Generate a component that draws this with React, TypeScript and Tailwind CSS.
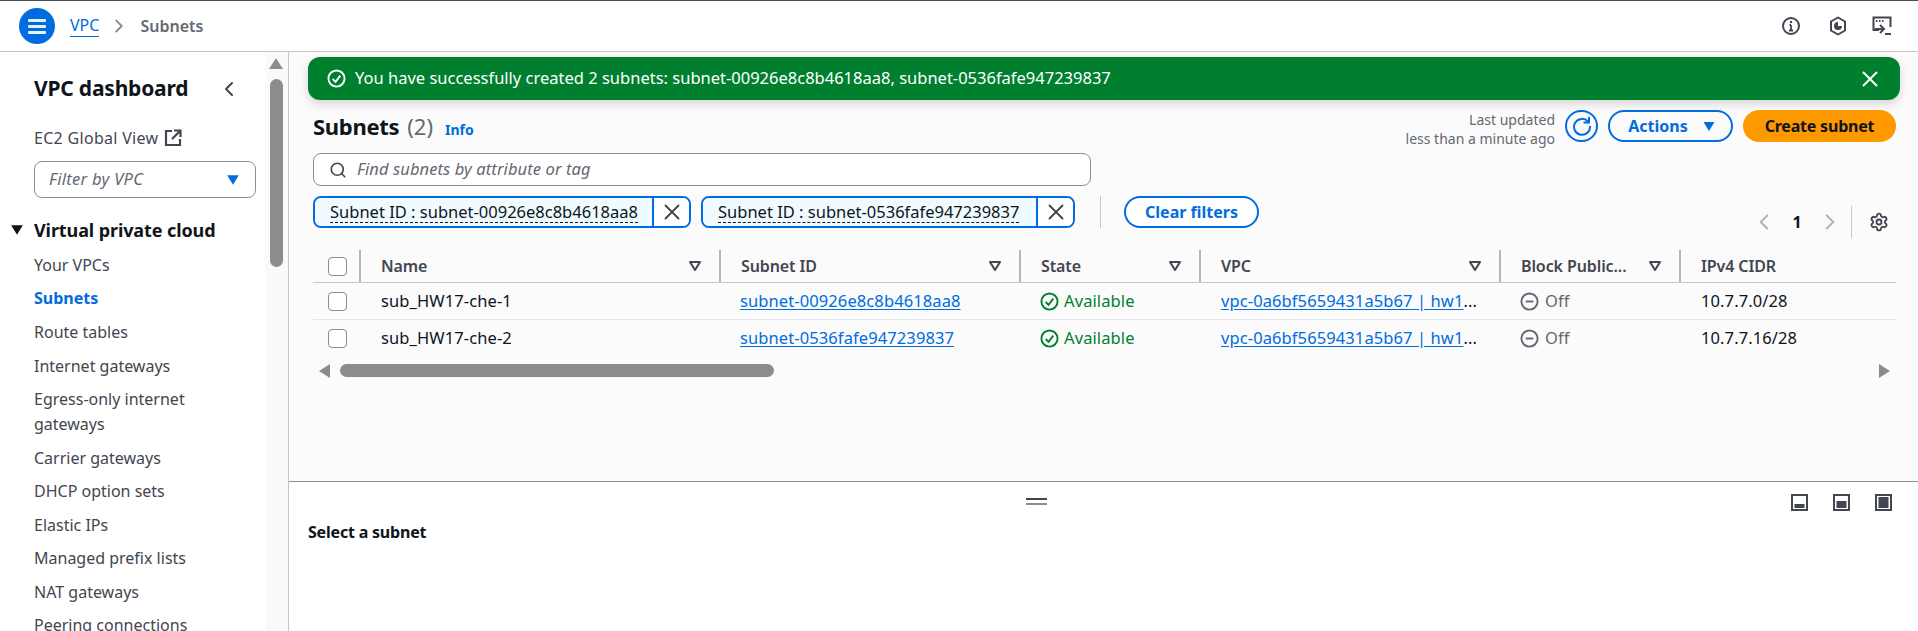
import { Search, X, ChevronLeft, ChevronRight, Settings } from 'lucide-react';

const FONT = "font-['Noto_Sans','Liberation_Sans',sans-serif]";

const navItems = ['Route tables', 'Internet gateways', 'Egress-only internet gateways', 'Carrier gateways', 'DHCP option sets', 'Elastic IPs', 'Managed prefix lists', 'NAT gateways', 'Peering connections'];

function Caret({ className }: { className?: string }) {
  return (
    <svg viewBox="0 0 12 10" className={className}>
      <path d="M1 1h10L6 9z" fill="currentColor" />
    </svg>
  );
}

function SortCaret() {
  return (
    <svg viewBox="0 0 14 12" className="w-[14px] h-[12px] text-[#424650] shrink-0">
      <path d="M2 2h10L7 10z" fill="none" stroke="currentColor" strokeWidth="2" strokeLinejoin="round" />
    </svg>
  );
}

function Checkbox() {
  return <div className="w-[19px] h-[19px] rounded-[4px] border border-[#8c8c94] bg-white" />;
}

function HeaderCell({ label, divider = true }: { label: string; divider?: boolean }) {
  return (
    <div className="flex items-center h-[32px] pl-[20px] pr-[17px] border-r-2 border-[#b4b4bb] last:border-r-0 justify-between">
      <span className="text-[16px] font-semibold text-[#424650] tracking-[-0.1px] whitespace-nowrap">{label}</span>
      {divider && <SortCaret />}
    </div>
  );
}

function StatusOk() {
  return (
    <span className="flex items-center gap-[5px] text-[#00802f]">
      <svg viewBox="0 0 20 20" className="w-[19px] h-[19px]">
        <circle cx="10" cy="10" r="8.5" fill="none" stroke="currentColor" strokeWidth="2" />
        <path d="M6 10.5l3 3 5-6.5" fill="none" stroke="currentColor" strokeWidth="2" />
      </svg>
      Available
    </span>
  );
}

function StatusOff() {
  return (
    <span className="flex items-center gap-[6px] text-[#656871]">
      <svg viewBox="0 0 20 20" className="w-[19px] h-[19px]">
        <circle cx="10" cy="10" r="8.5" fill="none" stroke="currentColor" strokeWidth="2" />
        <path d="M6 10h8" stroke="currentColor" strokeWidth="2" />
      </svg>
      Off
    </span>
  );
}

function Row({ name, id, cidr, last }: { name: string; id: string; cidr: string; last?: boolean }) {
  return (
    <div className={`grid grid-cols-[48px_360px_300px_180px_300px_180px_215px] items-center h-[37px] text-[16.5px] tracking-[0.1px] text-[#0f141a] ${last ? '' : 'border-b border-[#e6e6ea]'}`}>
      <div className="pl-[15px]"><Checkbox /></div>
      <div className="pl-[20px]">{name}</div>
      <div className="pl-[19px]"><span className="text-[#006ce0] underline underline-offset-2">{id}</span></div>
      <div className="pl-[19px]"><StatusOk /></div>
      <div className="pl-[20px] whitespace-nowrap">
        <span className="text-[#006ce0] underline underline-offset-2">vpc-0a6bf5659431a5b67 | hw1</span>...
      </div>
      <div className="pl-[19px]"><StatusOff /></div>
      <div className="pl-[20px]">{cidr}</div>
    </div>
  );
}

function FilterToken({ text, width }: { text: string; width: string }) {
  return (
    <div className={`flex h-[32px] rounded-[8px] border-2 border-[#006ce0] overflow-hidden ${width}`}>
      <div className="flex-1 bg-[#f0fbff] pl-[15px] flex items-center border-r-2 border-[#006ce0] whitespace-nowrap text-[16.5px] tracking-[0px] text-[#0f141a]">
        <span className="border-b border-dashed border-[#0f141a] leading-[21px]">
          {text}
        </span>
      </div>
      <div className="w-[35px] flex items-center justify-center bg-white">
        <X className="w-[26px] h-[26px] text-[#424650]" strokeWidth={1.7} />
      </div>
    </div>
  );
}

function PanelIcon({ fill }: { fill: number }) {
  return (
    <svg viewBox="0 0 17 17" className="w-[17px] h-[17px]">
      <rect x="1" y="1" width="15" height="15" fill="none" stroke="#424650" strokeWidth="2" />
      <rect x="3.5" y={14 - fill} width="10" height={fill} fill="#424650" />
    </svg>
  );
}

export default function App() {
  return (
    <div className={`h-[631px] w-[1918px] overflow-hidden flex flex-col bg-white ${FONT}`}>
      <header className="h-[52px] shrink-0 border-t border-[#414d5c] border-b border-b-[#c6c6cd] flex items-center pl-[19px] pr-[26px]">
        <div className="w-[36px] h-[36px] rounded-full bg-[#006ce0] flex flex-col items-center justify-center gap-[3px]">
          <div className="w-[18px] h-[3px] bg-[#e6f3ff] rounded-[1px]" />
          <div className="w-[18px] h-[3px] bg-[#e6f3ff] rounded-[1px]" />
          <div className="w-[18px] h-[3px] bg-[#e6f3ff] rounded-[1px]" />
        </div>
        <span className="ml-[15px] text-[16px] text-[#006ce0] border-b border-[#006ce0] leading-[21px]">VPC</span>
        <ChevronRight className="ml-[9px] w-[22px] h-[22px] text-[#8c8c94]" strokeWidth={2} />
        <span className="ml-[10px] text-[16px] font-semibold text-[#656871]">Subnets</span>
        <div className="ml-auto flex items-center text-[#424650]">
          <svg viewBox="0 0 18 18" className="w-[18px] h-[18px]">
            <circle cx="9" cy="9" r="8" fill="none" stroke="currentColor" strokeWidth="2" />
            <path d="M9 8v5.5M7 13.5h4M7.5 8H9" stroke="currentColor" strokeWidth="1.8" fill="none" />
            <circle cx="9" cy="5" r="1.2" fill="currentColor" />
          </svg>
          <svg viewBox="0 0 18 20" className="ml-[29px] w-[18px] h-[20px]">
            <path d="M9 1.5l7 4v9l-7 4-7-4v-9z" fill="none" stroke="currentColor" strokeWidth="2" strokeLinejoin="round" />
            <path d="M9 6a4 4 0 1 0 4 4L9 10z" fill="currentColor" />
          </svg>
          <svg viewBox="0 0 20 20" className="ml-[25px] w-[20px] h-[20px]">
            <path d="M7 14H1.5V1.5h17V11" fill="none" stroke="currentColor" strokeWidth="2" />
            <path d="M4 5h1.5M7 5h1.5M10 5h1.5" stroke="currentColor" strokeWidth="2" />
            <path d="M8 9l4 4-4 4M3 13h8" fill="none" stroke="currentColor" strokeWidth="2" />
            <path d="M13 18h6" stroke="currentColor" strokeWidth="2" />
          </svg>
        </div>
      </header>

      <div className="flex-1 flex min-h-0">
        <aside className="w-[289px] shrink-0 flex border-r border-[#c6c6cd]">
          <nav className="w-[265px] shrink-0 pl-[34px] pr-[9px] text-[16px] text-[#424650] overflow-hidden">
            <div className="flex items-center justify-between h-[28px] mt-[23px]">
              <span className="text-[21px] font-bold text-[#0f141a] tracking-[-0.2px] whitespace-nowrap">VPC dashboard</span>
              <ChevronLeft className="w-[24px] h-[24px] text-[#424650] mr-[15px]" strokeWidth={2} />
            </div>
            <div className="flex items-center gap-[6px] mt-[23px] h-[24px] tracking-[0.3px]">
              EC2 Global View
              <svg viewBox="0 0 18 18" className="w-[18px] h-[18px]">
                <path d="M8 2H2v14h14v-6M10 1.5h6.5V8M16 2L8 10" fill="none" stroke="#424650" strokeWidth="2.2" />
              </svg>
            </div>
            <div className="mt-[11px] h-[37px] rounded-[8px] border border-[#8c8c94] flex items-center justify-between pl-[14px] pr-[15px] italic text-[16.5px] tracking-[0.3px] text-[#656871]">
              Filter by VPC
              <Caret className="w-[14px] h-[12px] text-[#006ce0]" />
            </div>
            <div className="relative mt-[20px] h-[24px] flex items-center font-bold text-[#0f141a] text-[18px] tracking-[-0.1px]">
              <Caret className="absolute -left-[24px] w-[14px] h-[12px] text-[#0f141a]" />
              Virtual private cloud
            </div>
            <div className="mt-[11px] h-[24px] leading-[24px]">Your VPCs</div>
            <div className="mt-[9px] h-[24px] leading-[24px] font-bold text-[#006ce0]">Subnets</div>
            <div className="flex flex-col gap-[8.5px] mt-[10px]">
              {navItems.map((item) => (
                <div key={item} className="leading-[25px] pr-[40px]">{item}</div>
              ))}
            </div>
          </nav>
          <div className="flex-1 bg-[#fafafa] flex flex-col items-center pt-[6px]">
            <div className="w-0 h-0 border-x-[7px] border-x-transparent border-b-[11px] border-b-[#8c8c8c] ml-[-1px]" />
            <div className="w-[13px] h-[188px] rounded-full bg-[#8c8c8c] mt-[10px] ml-[-1px]" />
          </div>
        </aside>

        <div className="flex-1 min-w-0 flex flex-col">
          <main className="h-[430px] shrink-0 bg-[#fbfbfb] border-b border-[#8c8c94] pl-[19px] pr-[18px] pt-[5px]">
            <div className="h-[43px] rounded-[12px] bg-[#00802f] text-white shadow-[0_4px_10px_rgba(0,7,22,0.15)] flex items-center pl-[19px] pr-[17px] text-[16.5px]">
              <svg viewBox="0 0 20 20" className="w-[19px] h-[19px] mr-[9px]">
                <circle cx="10" cy="10" r="8.5" fill="none" stroke="currentColor" strokeWidth="2" />
                <path d="M6 10.5l3 3 5-6.5" fill="none" stroke="currentColor" strokeWidth="2" />
              </svg>
              You have successfully created 2 subnets: subnet-00926e8c8b4618aa8, subnet-0536fafe947239837
              <X className="ml-auto w-[26px] h-[26px]" strokeWidth={1.8} />
            </div>

            <div className="pl-[5px] pr-[4px]">
              <div className="flex items-center justify-between h-[32px] mt-[10px]">
                <div className="flex items-baseline">
                  <span className="text-[22px] font-bold text-[#0f141a] tracking-[-0.3px]">Subnets</span>
                  <span className="text-[22px] text-[#656871] ml-[8px]">(2)</span>
                  <span className="text-[14px] font-bold text-[#006ce0] ml-[12px]">Info</span>
                </div>
                <div className="flex items-center">
                  <div className="text-right text-[14px] leading-[19px] text-[#656871] mr-[10px] mt-[6px]">
                    <div>Last updated</div>
                    <div>less than a minute ago</div>
                  </div>
                  <div className="w-[33px] h-[32px] rounded-full border-2 border-[#006ce0] flex items-center justify-center">
                    <svg viewBox="0 0 20 20" className="w-[20px] h-[20px] text-[#006ce0]">
                      <path d="M16 5.5A8 8 0 1 0 18 10" fill="none" stroke="currentColor" strokeWidth="2" />
                      <path d="M17 1v5.5h-5.5" fill="none" stroke="currentColor" strokeWidth="2" />
                    </svg>
                  </div>
                  <div className="ml-[10px] w-[125px] h-[32px] rounded-full border-2 border-[#006ce0] flex items-center justify-center gap-[14px] text-[16px] font-bold text-[#006ce0] pl-[3px]">
                    Actions
                    <Caret className="w-[14px] h-[11px]" />
                  </div>
                  <div className="ml-[10px] w-[153px] h-[32px] rounded-full bg-[#ff9900] flex items-center justify-center text-[16px] font-bold text-[#0f141a] tracking-[-0.2px]">
                    Create subnet
                  </div>
                </div>
              </div>

              <div className="mt-[11px] w-[778px] h-[33px] rounded-[8px] border border-[#8c8c94] bg-white flex items-center pl-[15px] italic text-[16.5px] text-[#656871] tracking-[0.1px]">
                <Search className="w-[18px] h-[18px] text-[#424650] mr-[10px]" strokeWidth={2.2} />
                Find subnets by attribute or tag
              </div>

              <div className="flex items-center mt-[10px] h-[32px]">
                <FilterToken text="Subnet ID : subnet-00926e8c8b4618aa8" width="w-[378px]" />
                <div className="w-[10px]" />
                <FilterToken text="Subnet ID : subnet-0536fafe947239837" width="w-[374px]" />
                <div className="w-px h-[32px] bg-[#c6c6cd] ml-[25px]" />
                <div className="ml-[23px] w-[135px] h-[32px] rounded-full border-2 border-[#006ce0] bg-white flex items-center justify-center text-[16px] font-bold text-[#006ce0]">
                  Clear filters
                </div>
              </div>

              <div className="relative">
                <div className="absolute right-0 -top-[22px] h-[32px] flex items-center">
                  <ChevronLeft className="w-[26px] h-[26px] text-[#b4b4bb]" strokeWidth={2} />
                  <span className="ml-[12px] w-[16px] text-center text-[16px] font-bold text-[#0f141a]">1</span>
                  <ChevronRight className="ml-[12px] w-[26px] h-[26px] text-[#b4b4bb]" strokeWidth={2} />
                  <div className="ml-[8px] w-px h-[32px] bg-[#c6c6cd]" />
                  <Settings className="ml-[17px] mr-[7px] w-[20px] h-[20px] text-[#424650]" strokeWidth={2.2} />
                </div>
              </div>

              <div className="mt-[22px] grid grid-cols-[48px_360px_300px_180px_300px_180px_215px] items-center h-[33px] pb-[3px] border-b border-[#c6c6cd]">
                <div className="pl-[15px] border-r-2 border-[#b4b4bb] h-[32px] flex items-center"><Checkbox /></div>
                <HeaderCell label="Name" />
                <HeaderCell label="Subnet ID" />
                <HeaderCell label="State" />
                <HeaderCell label="VPC" />
                <HeaderCell label="Block Public..." />
                <HeaderCell label="IPv4 CIDR" divider={false} />
              </div>
              <Row name="sub_HW17-che-1" id="subnet-00926e8c8b4618aa8" cidr="10.7.7.0/28" />
              <Row name="sub_HW17-che-2" id="subnet-0536fafe947239837" cidr="10.7.7.16/28" last />
              <div className="flex items-center h-[13px] mt-[7px] pl-[6px] pr-[6px]">
                <div className="w-0 h-0 border-y-[7px] border-y-transparent border-r-[11px] border-r-[#8c8c8c]" />
                <div className="ml-[10px] w-[434px] h-[13px] rounded-full bg-[#8c8c8c]" />
                <div className="ml-auto w-0 h-0 border-y-[7px] border-y-transparent border-l-[11px] border-l-[#8c8c8c]" />
              </div>
            </div>
          </main>

          <section className="flex-1 bg-white relative pl-[19px]">
            <div className="absolute left-[737px] top-[16px] w-[21px] flex flex-col gap-[3px]">
              <div className="h-[2px] bg-[#424650]" />
              <div className="h-[2px] bg-[#8c8c94]" />
            </div>
            <div className="flex justify-end gap-[25px] pr-[26px] pt-[12px]">
              <PanelIcon fill={4} />
              <PanelIcon fill={7} />
              <PanelIcon fill={11} />
            </div>
            <div className="mt-[9px] text-[16px] font-bold text-[#0f141a] tracking-[-0.2px]">Select a subnet</div>
          </section>
        </div>
      </div>
    </div>
  );
}
